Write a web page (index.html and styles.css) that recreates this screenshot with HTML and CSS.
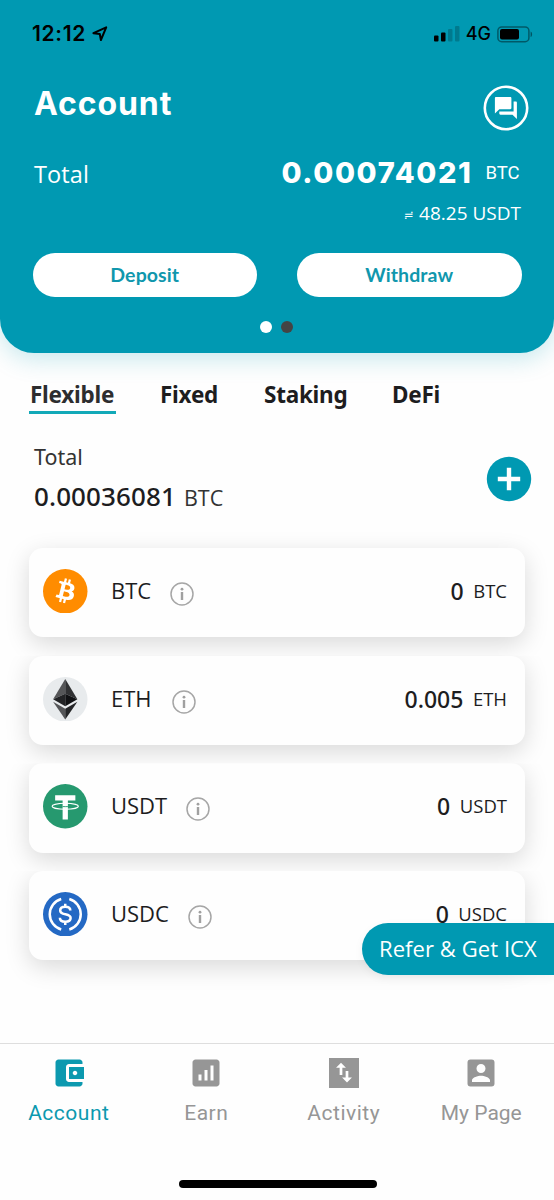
FILE: index.html
```html
<!DOCTYPE html>
<html lang="en">
<head>
<meta charset="utf-8">
<title>Account</title>
<link rel="stylesheet" href="styles.css">
</head>
<body>
<svg class="defs" width="0" height="0">
  <symbol id="info" viewBox="0 0 24 24">
    <circle cx="12" cy="12" r="11" fill="none" stroke="#a6a6a6" stroke-width="1.5"/>
    <circle cx="12" cy="7.2" r="1.400" fill="#a0a0a0"/>
    <rect x="10.800" y="10" width="2.400" height="8" fill="#a0a0a0"/>
  </symbol>
</svg>
<div class="screen">
  <header class="hero">
    <div class="status">
      <span class="time">12:12</span>
      <svg class="locate" width="16" height="16" viewBox="0 0 16 16"><path d="M1.400 7.200 14.200 1.300 8.900 14 7.800 8Z" fill="none" stroke="#000" stroke-width="2" stroke-linejoin="round"/></svg>
      <div class="status-right">
        <svg width="26" height="16" viewBox="0 0 26 16"><rect x="0" y="9.5" width="4.500" height="6" rx="1"/><rect x="7" y="6.5" width="4.500" height="9" rx="1"/><rect x="14" y="3" width="4.500" height="12.500" rx="1" opacity=".2"/><rect x="21" y="0" width="4.500" height="15.500" rx="1" opacity=".2"/></svg>
        <span class="net">4G</span>
        <svg width="36" height="17" viewBox="0 0 36 17"><rect x=".9" y=".9" width="31" height="14.800" rx="3.800" fill="none" stroke="#000" stroke-opacity=".42" stroke-width="1.500"/><rect x="3" y="3" width="19" height="10.600" rx="2"/><path d="M33.600 5.500c2 .8 2 4.800 0 5.600z" opacity=".45"/></svg>
      </div>
    </div>
    <div class="title-row">
      <h1>Account</h1>
      <svg class="chat" width="46" height="46" viewBox="0 0 46 46"><circle cx="23" cy="23" r="21.200" fill="none" stroke="#fff" stroke-width="2.600"/><path transform="translate(9.700 9.900) scale(1.100)" fill="#fff" d="M21 6h-2v9H6v2c0 .55.45 1 1 1h11l4 4V7c0-.55-.45-1-1-1zm-4 6V3c0-.55-.45-1-1-1H3c-.55 0-1 .45-1 1v14l4-4h10c.55 0 1-.45 1-1z"/></svg>
    </div>
    <div class="balance">
      <span class="balance-label">Total</span>
      <span class="balance-value">0.00074021</span>
      <span class="balance-unit">BTC</span>
    </div>
    <div class="fiat"><span class="approx">≓</span><span>48.25 USDT</span></div>
    <div class="actions"><button>Deposit</button><button class="withdraw">Withdraw</button></div>
    <div class="dots"><i></i><i class="dark"></i></div>
  </header>

  <nav class="tabs">
    <a class="active">Flexible</a><a class="fixed-tab">Fixed</a><a class="staking">Staking</a><a class="defi">DeFi</a>
  </nav>

  <section class="summary">
    <div>
      <div class="sum-label">Total</div>
      <div class="sum-value"><b>0.00036081</b><span>BTC</span></div>
    </div>
    <svg width="46" height="46" viewBox="0 0 46 46"><circle cx="23" cy="23" r="22.200" fill="#0099b2"/><path d="M23 11.800v22.400M11.800 23h22.400" stroke="#fff" stroke-width="4.400"/></svg>
  </section>

  <main class="list">
    <div class="row"><div class="card">
      <svg class="coin" viewBox="0 0 44 44"><circle cx="22" cy="22" r="22" fill="#ff8c00"/><path transform="translate(2.900 2.300) scale(1.630)" fill="#fff" fill-rule="evenodd" d="M17.288 10.291c.24-1.59-.974-2.45-2.64-3.03l.54-2.153-1.315-.33-.525 2.107c-.345-.087-.705-.167-1.064-.25l.526-2.127-1.32-.33-.54 2.165c-.285-.067-.565-.132-.84-.2l-1.815-.45-.35 1.407s.975.225.955.236c.535.136.63.486.615.766l-1.477 5.92c-.075.166-.24.406-.614.314.015.02-.96-.24-.96-.24l-.66 1.51 1.71.426.93.242-.54 2.19 1.32.327.54-2.17c.36.1.705.19 1.05.273l-.51 2.154 1.32.33.545-2.19c2.24.427 3.93.257 4.64-1.774.57-1.637-.03-2.58-1.217-3.196.854-.193 1.5-.76 1.68-1.93h.01zm-3.01 4.22c-.404 1.64-3.157.75-4.05.53l.72-2.9c.896.23 3.757.67 3.33 2.37zm.41-4.24c-.37 1.49-2.662.735-3.405.55l.654-2.64c.744.18 3.137.524 2.75 2.084z"/></svg>
      <span class="name">BTC</span><svg class="info"><use href="#info"/></svg>
      <span class="amount">0</span><span class="unit">BTC</span>
    </div></div>
    <div class="row"><div class="card">
      <svg class="coin" viewBox="0 0 44 44"><circle cx="22" cy="22" r="22" fill="#e8ebed"/><path d="M22 2 10 22l12-5.500z" fill="#555658"/><path d="M22 2v14.500L34 22z" fill="#303133"/><path d="M10 22l12-5.500V29z" fill="#222325"/><path d="M34 22l-12-5.500V29z" fill="#101113"/><path d="M10 24.500 22 31.500V42z" fill="#555658"/><path d="M34 24.500 22 31.500V42z" fill="#242527"/></svg>
      <span class="name">ETH</span><svg class="info eth"><use href="#info"/></svg>
      <span class="amount">0.005</span><span class="unit">ETH</span>
    </div></div>
    <div class="row"><div class="card">
      <svg class="coin" viewBox="0 0 44 44"><circle cx="22" cy="22" r="22" fill="#26996f"/><path d="M12 11h20v5.200h-7.400V35h-5.200V16.200H12z" fill="#fff"/><ellipse cx="22" cy="22" rx="13" ry="3" fill="none" stroke="#fff" stroke-width="1.100"/><path d="M19.400 22.300q2.600.2 5.200 0" fill="none" stroke="#26996f" stroke-width=".9"/></svg>
      <span class="name">USDT</span><svg class="info"><use href="#info"/></svg>
      <span class="amount">0</span><span class="unit">USDT</span>
    </div></div>
    <div class="row"><div class="card">
      <svg class="coin" viewBox="0 0 44 44"><circle cx="22" cy="22" r="22" fill="#2469c4"/><g fill="none" stroke="#fff" stroke-width="2.500"><path d="M18 7a15.600 15.600 0 0 0 0 30M26 7a15.600 15.600 0 0 1 0 30"/><path d="M27 18.200c0-2.600-2-3.700-5-3.700s-5 1.300-5 3.700c0 5.300 10.300 2.400 10.300 7.600 0 2.600-2.200 3.700-5.300 3.700s-5.300-1.300-5.300-4M22 11.600v3M22 29.500v3.200"/></g></svg>
      <span class="name">USDC</span><svg class="info"><use href="#info"/></svg>
      <span class="amount">0</span><span class="unit">USDC</span>
    </div></div>
  </main>
  <a class="refer">Refer &amp; Get ICX</a>

  <footer class="bottom">
    <div class="nav">
      <a class="on acc"><svg viewBox="0 0 24 24"><path d="M21 18v1c0 1.100-.9 2-2 2H5c-1.110 0-2-.9-2-2V5c0-1.100.89-2 2-2h14c1.100 0 2 .9 2 2v1h-9c-1.110 0-2 .9-2 2v8c0 1.100.89 2 2 2h9zm-9-2h10V8H12v8zm4-2.500c-.83 0-1.500-.67-1.500-1.500s.67-1.500 1.500-1.500 1.500.67 1.500 1.500-.67 1.500-1.500 1.500z"/></svg><span>Account</span></a>
      <a class="earn"><svg viewBox="0 0 24 24"><path fill-rule="evenodd" d="M5 3h14c1.100 0 2 .9 2 2v14c0 1.100-.9 2-2 2H5c-1.100 0-2-.9-2-2V5c0-1.100.9-2 2-2zm2 10v4h2v-4zm4-3v7h2v-7zm4-3v10h2V7z"/></svg><span>Earn</span></a>
      <a class="activity"><svg viewBox="0 0 24 24"><path d="M2 2h20v20H2z"/><path fill="#fff" d="M10 5.200 6.700 8.500h2.400v4.800h1.800V8.500h2.400zM14 18.300l3.300-3.300h-2.400v-4.300h-1.800V15h-2.400z"/></svg><span>Activity</span></a>
      <a class="mypage"><svg viewBox="0 0 24 24"><path fill-rule="evenodd" d="M5 3h14a2 2 0 0 1 2 2v14a2 2 0 0 1-2 2H5a2 2 0 0 1-2-2V5a2 2 0 0 1 2-2zm10 6a3 3 0 1 0-6 0 3 3 0 0 0 6 0zM6 17v1h12v-1c0-2-4-3.100-6-3.100S6 15 6 17z"/></svg><span>My Page</span></a>
    </div>
    <div class="home"></div>
  </footer>
</div>
</body>
</html>
```
FILE: styles.css
```css
* { box-sizing: border-box; }
body { margin: 0; background: #fff; font-family: "Open Sans", "Noto Sans", sans-serif; color: #1d1d1f; }
svg { display: block; flex: none; }
.defs { position: absolute; }
.screen { position: relative; width: 554px; height: 1200px; overflow: hidden; background: #fefefe; display: flex; flex-direction: column; }

.hero { height: 353px; flex: none; background: #0099b2; border-radius: 0 0 34px 34px; box-shadow: 0 6px 24px rgba(0, 153, 178, .22); color: #fff; display: flex; flex-direction: column; }
.status { height: 68px; padding: 0 21px 0 32px; display: flex; align-items: center; color: #000; }
.time { font: 600 21px/24px Inter, sans-serif; letter-spacing: .7px; width: 60px; }
.status-right { margin-left: auto; display: flex; align-items: center; gap: 6px; }
.net { font: 500 18px/24px Inter, sans-serif; }
.title-row { height: 80px; padding: 0 25.500px 0 34px; display: flex; justify-content: space-between; }
.title-row h1 { margin: 16px 0 0; font: 700 32px/40px Inter, sans-serif; letter-spacing: .9px; }
.chat { margin-top: 17px; }
.balance { height: 50px; padding: 0 34.500px 0 34px; display: flex; align-items: center; }
.balance-label { font-size: 23.500px; font-weight: 400; letter-spacing: .1px; padding-top: 1px; }
.balance-value { margin-left: auto; font: 800 29px/36px Inter, sans-serif; letter-spacing: 1.600px; }
.balance-unit { margin-left: 13px; font: 400 18.500px/36px Roboto, sans-serif; }
.fiat { height: 30px; padding: 0 33px; display: flex; justify-content: flex-end; align-items: center; gap: 5px; font-size: 19px; font-weight: 400; }
.approx { font: 12px/20px "DejaVu Sans", sans-serif; padding-top: 3px; }
.actions { display: flex; gap: 40px; padding: 25px 32.500px 0; }
.actions button { flex: 1; height: 44px; border: 0; padding: 0; border-radius: 22px; background: #fff; color: #1097ad; font: 700 19.500px/44px Lato, sans-serif; letter-spacing: .1px; }
.dots { display: flex; justify-content: center; gap: 9px; margin: 23.500px 1px 0 0; }
.dots i { width: 12px; height: 12px; border-radius: 50%; background: #fff; }
.dots .dark { background: #444; }

.tabs { height: 61px; padding: 25px 0 0 29px; display: flex; font-family: "Noto Sans", sans-serif; font-weight: 700; font-size: 22.500px; line-height: 33px; letter-spacing: -.25px; }
.tabs a { height: 36px; white-space: nowrap; }
.tabs .active { width: 87px; padding-left: 1px; border-bottom: 3.500px solid #12a9b8; color: #2d2d2f; }
.fixed-tab { margin-left: 44px; width: 104px; }
.staking { width: 128px; }

.summary { height: 134px; flex: none; padding: 28px 22px 0 34px; display: flex; justify-content: space-between; }
.summary svg { margin-top: 14px; }
.sum-label { font-family: "Noto Sans", sans-serif; font-size: 21.500px; line-height: 30px; color: #333; }
.sum-value { display: flex; align-items: baseline; margin-top: 6px; line-height: 36px; }
.sum-value b { font-family: "Noto Sans", sans-serif; font-size: 26px; font-weight: 500; letter-spacing: .1px; }
.sum-value span { margin-left: 8px; font-size: 21.500px; font-weight: 400; color: #333; }

.row { height: 107.700px; clip-path: inset(0); padding: 0 29px; }
.row:first-child { clip-path: inset(-40px 0 0 0); }
.row:last-child { clip-path: inset(0 0 -50px 0); }
.list { margin-top: -.2px; }
.card { height: 89.500px; border-radius: 14px; background: #fefefe; box-shadow: 0 7px 24px rgba(0, 0, 0, .15); padding: 0 18px 3px 14px; display: flex; align-items: center; }
.coin { width: 44.500px; height: 44.500px; }
.name { margin-left: 23.500px; padding-bottom: 2px; font-size: 22px; font-weight: 400; line-height: 30px; }
.info { width: 24px; height: 24px; margin: 6px 0 0 19px; }
.eth { margin-left: 20px; }
.amount { margin-left: auto; font-family: "Noto Sans", sans-serif; font-size: 23px; font-weight: 500; line-height: 30px; }
.unit { margin-left: 9.500px; font-size: 18.500px; font-weight: 400; line-height: 30px; }

.refer { position: absolute; left: 362px; top: 923px; width: 192px; height: 52px; border-radius: 26px 0 0 26px; background: #0099b2; color: #fff; padding-left: 17px; font-size: 22px; font-weight: 400; letter-spacing: .07px; line-height: 50px; white-space: nowrap; box-shadow: 0 3px 10px rgba(0, 0, 0, .05); }

.bottom { margin-top: auto; height: 157px; flex: none; border-top: 1.500px solid #dedede; }
.nav { display: flex; width: 550px; height: 120px; }
.nav a { width: 137.500px; padding-top: 11px; display: flex; flex-direction: column; align-items: center; color: #969696; font: 400 21px/26px Roboto, sans-serif; letter-spacing: .5px; }
.nav .mypage { letter-spacing: 0; }
.nav svg { width: 36px; height: 36px; fill: currentColor; margin-bottom: 9px; }
.nav .on { color: #0c99af; }
.home { width: 198px; height: 8px; border-radius: 4px; background: #000; margin: 16px 0 0 179px; }
```
